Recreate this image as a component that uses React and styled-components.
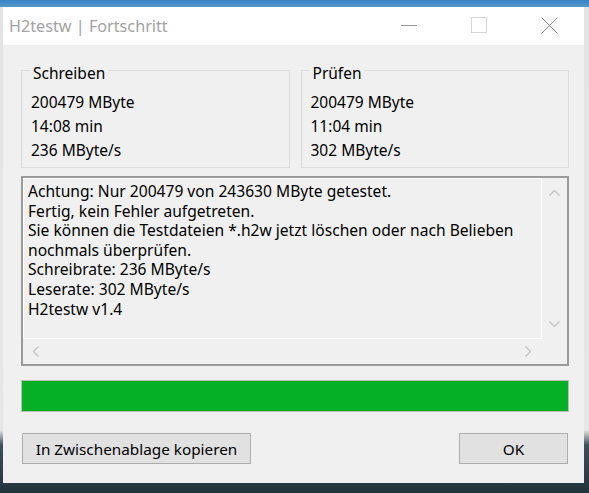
import React from "react";
import styled, { createGlobalStyle } from "styled-components";

const GlobalStyle = createGlobalStyle`
  html, body {
    margin: 0;
    padding: 0;
  }
  body {
    font-family: "Noto Sans", "Open Sans", sans-serif;
    color: #000;
  }
  * {
    box-sizing: border-box;
  }
`;

const Desktop = styled.div`
  width: 589px;
  height: 493px;
  padding: 7px 5px 10px 3px;
  display: flex;
  overflow: hidden;
  background: linear-gradient(
    to bottom,
    #3583c9 0,
    #5a97c6 7px,
    #e4e4e4 7px,
    #e6e6e6 430px,
    #3c5058 445px,
    #22343b 100%
  );
`;

const Window = styled.div`
  flex: 1;
  display: flex;
  flex-direction: column;
  background: #f0f0f0;
`;

const TitleBar = styled.div`
  height: 38px;
  display: flex;
  align-items: center;
  background: #fff;
`;

const Title = styled.div`
  flex: 1;
  padding-left: 6px;
  font-size: 16.2px;
  color: #a2a2a2;
`;

const CaptionButton = styled.div`
  width: 70px;
  height: 38px;
  display: flex;
  align-items: center;
  justify-content: center;
  padding-bottom: 2px;
`;

const Body = styled.div`
  flex: 1;
  display: flex;
  flex-direction: column;
  padding: 13px 15px 0 18px;
`;

const StatsRow = styled.div`
  display: grid;
  grid-template-columns: 1fr 1fr;
  gap: 11px;
`;

const Group = styled.fieldset`
  margin: 0;
  min-width: 0;
  padding: 8px 9px 5px;
  border: 1px solid #dcdcdc;
`;

const Legend = styled.legend`
  margin-left: -1px;
  padding: 6px 3px 0;
  font-size: 15.5px;
  line-height: 18px;
`;

const StatLine = styled.div`
  font-size: 15.5px;
  line-height: 24px;
`;

const TextBox = styled.div`
  margin-top: 8px;
  height: 190px;
  display: grid;
  grid-template-columns: 1fr 25px;
  grid-template-rows: 1fr 25px;
  border: 2px solid #9a9a9a;
`;

const TextContent = styled.div`
  padding: 3px 4px;
  border: 1px solid #fff;
  font-size: 15.6px;
  line-height: 19.6px;
  white-space: pre;
  overflow: hidden;
`;

const VScroll = styled.div`
  display: flex;
  flex-direction: column;
  align-items: center;
  justify-content: space-between;
  padding: 12px 0;
`;

const HScroll = styled.div`
  display: flex;
  align-items: center;
  justify-content: space-between;
  padding: 0 11px 0 10px;
`;

const Progress = styled.div`
  margin-top: 14px;
  height: 32px;
  border: 1px solid #bcbcbc;
  background: #e6e6e6;
`;

const ProgressFill = styled.div`
  height: 100%;
  background: #06b025;
`;

const ButtonRow = styled.div`
  margin-top: 21px;
  padding: 0 1px;
  display: flex;
  justify-content: space-between;
`;

const Button = styled.button`
  width: ${(p) => p.$width}px;
  height: 31px;
  padding: 0;
  border: 1px solid #adadad;
  background: #e1e1e1;
  font-family: inherit;
  font-size: 15.3px;
  color: #000;
`;

function Chevron({ dir }) {
  const pts = {
    up: "0.5,5.5 5.5,0.5 10.5,5.5",
    down: "0.5,0.5 5.5,5.5 10.5,0.5",
    left: "5.5,0.5 0.5,5.5 5.5,10.5",
    right: "0.5,0.5 5.5,5.5 0.5,10.5",
  }[dir];
  const vertical = dir === "up" || dir === "down";
  return (
    <svg width={vertical ? 11 : 6} height={vertical ? 6 : 11}>
      <polyline points={pts} fill="none" stroke="#c4c4c4" strokeWidth="1.4" />
    </svg>
  );
}

const log = [
  "Achtung: Nur 200479 von 243630 MByte getestet.",
  "Fertig, kein Fehler aufgetreten.",
  "Sie können die Testdateien *.h2w jetzt löschen oder nach Belieben",
  "nochmals überprüfen.",
  "Schreibrate: 236 MByte/s",
  "Leserate: 302 MByte/s",
  "H2testw v1.4",
];

const stats = [
  { title: "Schreiben", lines: ["200479 MByte", "14:08 min", "236 MByte/s"] },
  { title: "Prüfen", lines: ["200479 MByte", "11:04 min", "302 MByte/s"] },
];

export default function App() {
  const progress = 100;
  return (
    <>
      <GlobalStyle />
      <Desktop>
        <Window>
          <TitleBar>
            <Title>H2testw | Fortschritt</Title>
            <CaptionButton>
              <svg width="16" height="16">
                <line x1="0" y1="8.5" x2="16" y2="8.5" stroke="#9a9a9a" />
              </svg>
            </CaptionButton>
            <CaptionButton>
              <svg width="16" height="16">
                <rect x="0.5" y="0.5" width="15" height="15" fill="none" stroke="#d6d6d6" />
              </svg>
            </CaptionButton>
            <CaptionButton>
              <svg width="17" height="17">
                <line x1="0.5" y1="0.5" x2="16.5" y2="16.5" stroke="#8c8c8c" />
                <line x1="16.5" y1="0.5" x2="0.5" y2="16.5" stroke="#8c8c8c" />
              </svg>
            </CaptionButton>
          </TitleBar>
          <Body>
            <StatsRow>
              {stats.map((g) => (
                <Group key={g.title}>
                  <Legend>{g.title}</Legend>
                  {g.lines.map((l) => (
                    <StatLine key={l}>{l}</StatLine>
                  ))}
                </Group>
              ))}
            </StatsRow>
            <TextBox>
              <TextContent>{log.join("\n")}</TextContent>
              <VScroll>
                <Chevron dir="up" />
                <Chevron dir="down" />
              </VScroll>
              <HScroll>
                <Chevron dir="left" />
                <Chevron dir="right" />
              </HScroll>
              <div />
            </TextBox>
            <Progress>
              <ProgressFill style={{ width: `${progress}%` }} />
            </Progress>
            <ButtonRow>
              <Button $width={229}>In Zwischenablage kopieren</Button>
              <Button $width={109}>OK</Button>
            </ButtonRow>
          </Body>
        </Window>
      </Desktop>
    </>
  );
}
